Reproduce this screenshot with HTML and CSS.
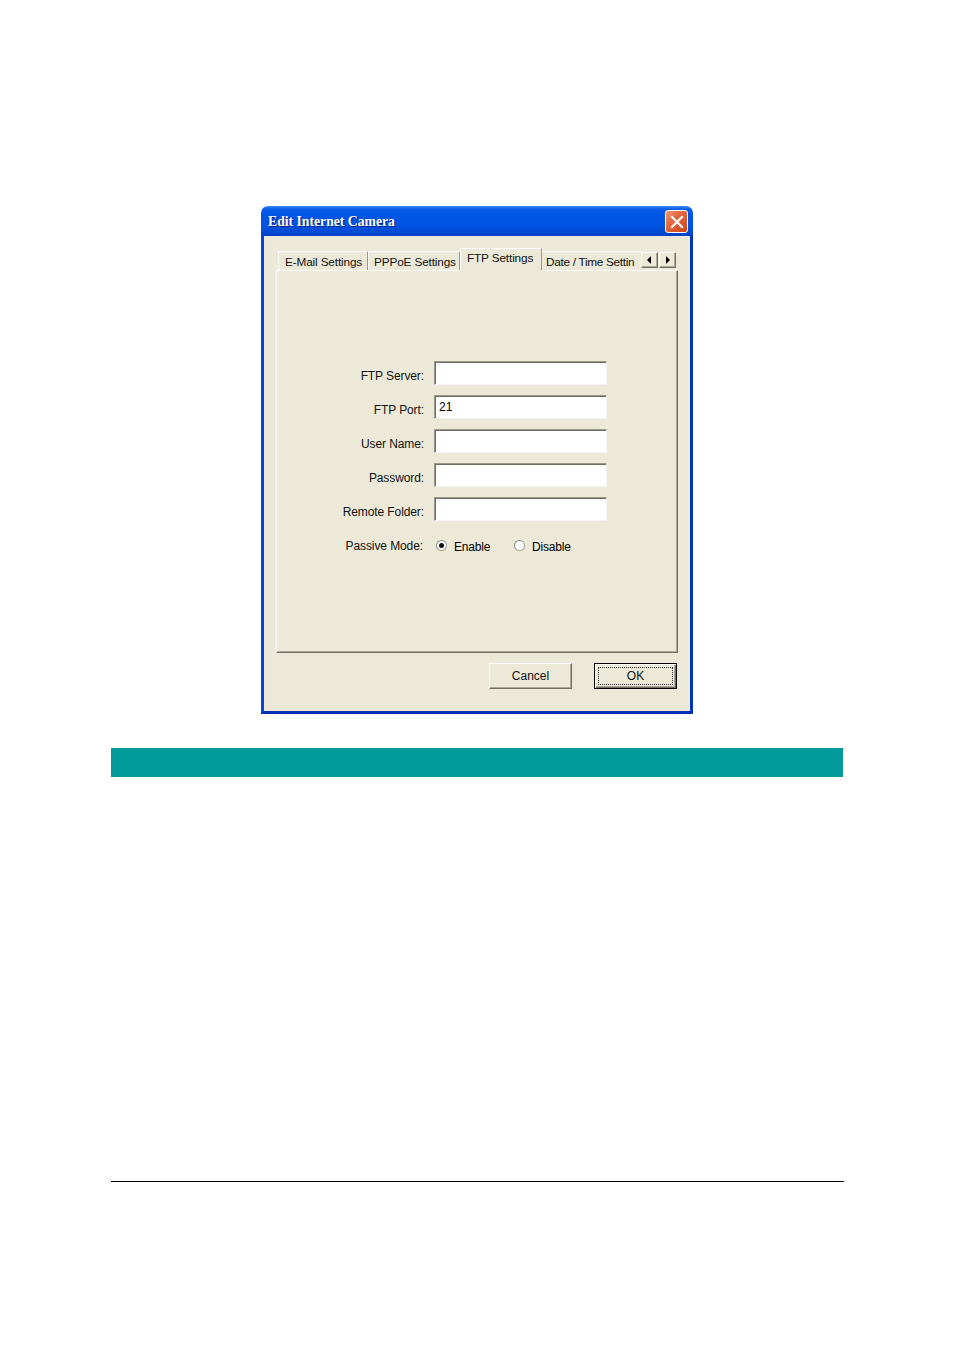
FILE: index.html
```html
<!DOCTYPE html>
<html>
<head>
<meta charset="utf-8">
<title>Edit Internet Camera</title>
<link rel="stylesheet" href="styles.css">
</head>
<body>
<div class="page">
  <div class="dialog">
    <div class="titlebar">
      <span class="title">Edit Internet Camera</span>
      <span class="close">
        <svg width="14" height="14" viewBox="0 0 14 14"><path d="M2 2 L12 12 M12 2 L2 12" stroke="#fff" stroke-width="2.2" stroke-linecap="square"/></svg>
      </span>
    </div>
    <div class="body">
      <div class="tabs">
        <div class="tab t1">E-Mail Settings</div>
        <div class="tab t2">PPPoE Settings</div>
        <div class="tab active">FTP Settings</div>
        <div class="tab clipped">Date / Time Settin</div>
        <div class="arrows">
          <span class="arrow"><svg width="6" height="8" viewBox="0 0 6 8"><path d="M4 0 L0 4 L4 8 Z" fill="#000"/></svg></span>
          <span class="arrow"><svg width="6" height="8" viewBox="0 0 6 8"><path d="M1 0 L5 4 L1 8 Z" fill="#000"/></svg></span>
        </div>
      </div>
      <div class="panel">
        <div class="form">
          <label class="lbl">FTP Server:</label><div class="input"></div>
          <label class="lbl">FTP Port:</label><div class="input">21</div>
          <label class="lbl">User Name:</label><div class="input"></div>
          <label class="lbl">Password:</label><div class="input"></div>
          <label class="lbl">Remote Folder:</label><div class="input"></div>
          <label class="lbl passive">Passive Mode:</label>
          <div class="radios">
            <span class="radio-item"><span class="radio checked"></span>Enable</span>
            <span class="radio-item"><span class="radio"></span>Disable</span>
          </div>
        </div>
      </div>
      <div class="buttons">
        <div class="btn">Cancel</div>
        <div class="btn default"><span class="focus">OK</span></div>
      </div>
    </div>
  </div>
  <div class="teal"></div>
  <div class="rule"></div>
</div>
</body>
</html>
```

FILE: styles.css
```css
html, body {
  margin: 0;
  padding: 0;
  background: #ffffff;
}
.page {
  padding-top: 206px;
  font-family: "Liberation Sans", Arial, sans-serif;
  font-size: 12px;
  color: #000;
}
.dialog {
  width: 432px;
  height: 508px;
  margin: 0 auto;
  display: flex;
  flex-direction: column;
  box-sizing: border-box;
}
.titlebar {
  height: 30px;
  border-radius: 7px 7px 0 0;
  background: linear-gradient(to bottom, #3a8cf8 0px, #0a5ee8 3px, #0055e5 8px, #0054e3 20px, #0048d0 27px, #0040c0 30px);
  display: flex;
  align-items: center;
  justify-content: space-between;
  padding: 0 5px 0 7px;
  box-sizing: border-box;
}
.title {
  font-family: "Liberation Serif", "Times New Roman", serif;
  font-weight: bold;
  font-size: 13.7px;
  color: #fff;
  text-shadow: 1px 1px 0 #0a1f80;
  padding-top: 2px;
}
.close {
  width: 21px;
  height: 21px;
  border: 1px solid #fff;
  border-radius: 3px;
  background: linear-gradient(135deg, #f09878 0%, #e5673f 40%, #cc4418 100%);
  display: flex;
  align-items: center;
  justify-content: center;
  margin-top: 1px;
}
.body {
  flex: 1;
  background: #ece9d8;
  border: 3px solid #0a4fe0;
  border-top: none;
  border-left-color: #0845d6;
  border-right-color: #0034b8;
  border-bottom-color: #0032b4;
  padding: 13px 12px 0 12px;
  display: flex;
  flex-direction: column;
}
.tabs {
  display: flex;
  align-items: flex-end;
  height: 22px;
  padding-left: 2px;
  position: relative;
  z-index: 1;
  margin-bottom: -1px;
  font-size: 11.8px;
  letter-spacing: -0.15px;
}
.tab {
  height: 19px;
  box-sizing: border-box;
  padding: 3px 0 0 6px;
  border-top: 1px solid #fff;
  border-left: 1px solid #fff;
  border-right: 1px solid #9d9a8c;
  background: #ece9d8;
  white-space: nowrap;
  color: #111;
  margin-bottom: 1px;
  flex: none;
  overflow: hidden;
}
.tab.t1 {
  width: 90px;
}
.tab.t2 {
  width: 92px;
  padding-left: 5px;
}
.tab.active {
  width: 82px;
  height: 23px;
  padding-top: 2px;
  padding-left: 6px;
  margin: 0 -1px 0 0;
  position: relative;
  z-index: 2;
  border-bottom: 1px solid #ece9d8;
}
.tab.clipped {
  width: 100px;
  padding-left: 4px;
  border-right: none;
  letter-spacing: -0.3px;
}
.arrows {
  display: flex;
  align-self: flex-start;
  margin-top: 3px;
}
.arrow {
  width: 17px;
  height: 16px;
  box-sizing: border-box;
  border-top: 1px solid #fff;
  border-left: 1px solid #fff;
  border-right: 1px solid #716f64;
  border-bottom: 1px solid #716f64;
  box-shadow: inset -1px -1px 0 #aca899;
  background: #ece9d8;
  display: flex;
  align-items: center;
  justify-content: center;
}
.arrow + .arrow {
  margin-left: 1px;
}
.panel {
  width: 402px;
  height: 383px;
  box-sizing: border-box;
  border-top: 1px solid #fff;
  border-left: 1px solid #fff;
  border-right: 1px solid #716f64;
  border-bottom: 1px solid #716f64;
  box-shadow: inset -1px -1px 0 #aca899;
  padding-top: 90px;
}
.form {
  display: grid;
  grid-template-columns: 147px 173px;
  column-gap: 10px;
  row-gap: 10px;
}
.lbl {
  text-align: right;
  color: #111;
  white-space: nowrap;
  padding-top: 8px;
  line-height: 14px;
  letter-spacing: -0.1px;
}
.input {
  height: 24px;
  box-sizing: border-box;
  background: #fff;
  border-top: 1px solid #9b978a;
  border-left: 1px solid #9b978a;
  border-right: 1px solid #f4f3ee;
  border-bottom: 1px solid #f4f3ee;
  box-shadow: inset 1px 1px 0 #6f6d62;
  padding: 4px 4px 0 4px;
  font-size: 12px;
}
.lbl.passive {
  padding-top: 8px;
  padding-right: 1px;
}
.radios {
  display: flex;
  align-items: center;
  padding-top: 7px;
  padding-left: 2px;
  height: 14px;
  line-height: 14px;
}
.radio-item {
  display: flex;
  align-items: center;
  width: 78px;
  padding-top: 3px;
  letter-spacing: -0.2px;
}
.radio {
  width: 11px;
  height: 11px;
  border-radius: 50%;
  box-sizing: border-box;
  border: 1px solid #aaa79a;
  border-left-color: #8a877b;
  border-top-color: #8a877b;
  background: #fff;
  margin-right: 7px;
  margin-top: -3px;
  position: relative;
}
.radio.checked::after {
  content: "";
  position: absolute;
  left: 2px;
  top: 2px;
  width: 5px;
  height: 5px;
  border-radius: 50%;
  background: #111;
}
.buttons {
  display: flex;
  justify-content: flex-end;
  gap: 22px;
  margin-top: 10px;
  padding-right: 1px;
}
.btn {
  width: 83px;
  height: 26px;
  box-sizing: border-box;
  border-top: 1px solid #fff;
  border-left: 1px solid #fff;
  border-right: 1px solid #716f64;
  border-bottom: 1px solid #716f64;
  box-shadow: inset -1px -1px 0 #aca899;
  background: #ece9d8;
  display: flex;
  align-items: center;
  justify-content: center;
  color: #111;
}
.btn.default {
  border: 1px solid #000;
  box-shadow: inset 1px 1px 0 #fff, inset -1px -1px 0 #716f64, inset -2px -2px 0 #aca899;
  padding: 3px;
}
.focus {
  flex: 1;
  align-self: stretch;
  border: 1px dotted #333;
  display: flex;
  align-items: center;
  justify-content: center;
}
.teal {
  width: 732px;
  height: 29px;
  margin: 34px auto 0 auto;
  background: #02999a;
}
.rule {
  width: 733px;
  height: 0;
  border-top: 1px solid #000;
  margin: 404px auto 0 auto;
}
```
